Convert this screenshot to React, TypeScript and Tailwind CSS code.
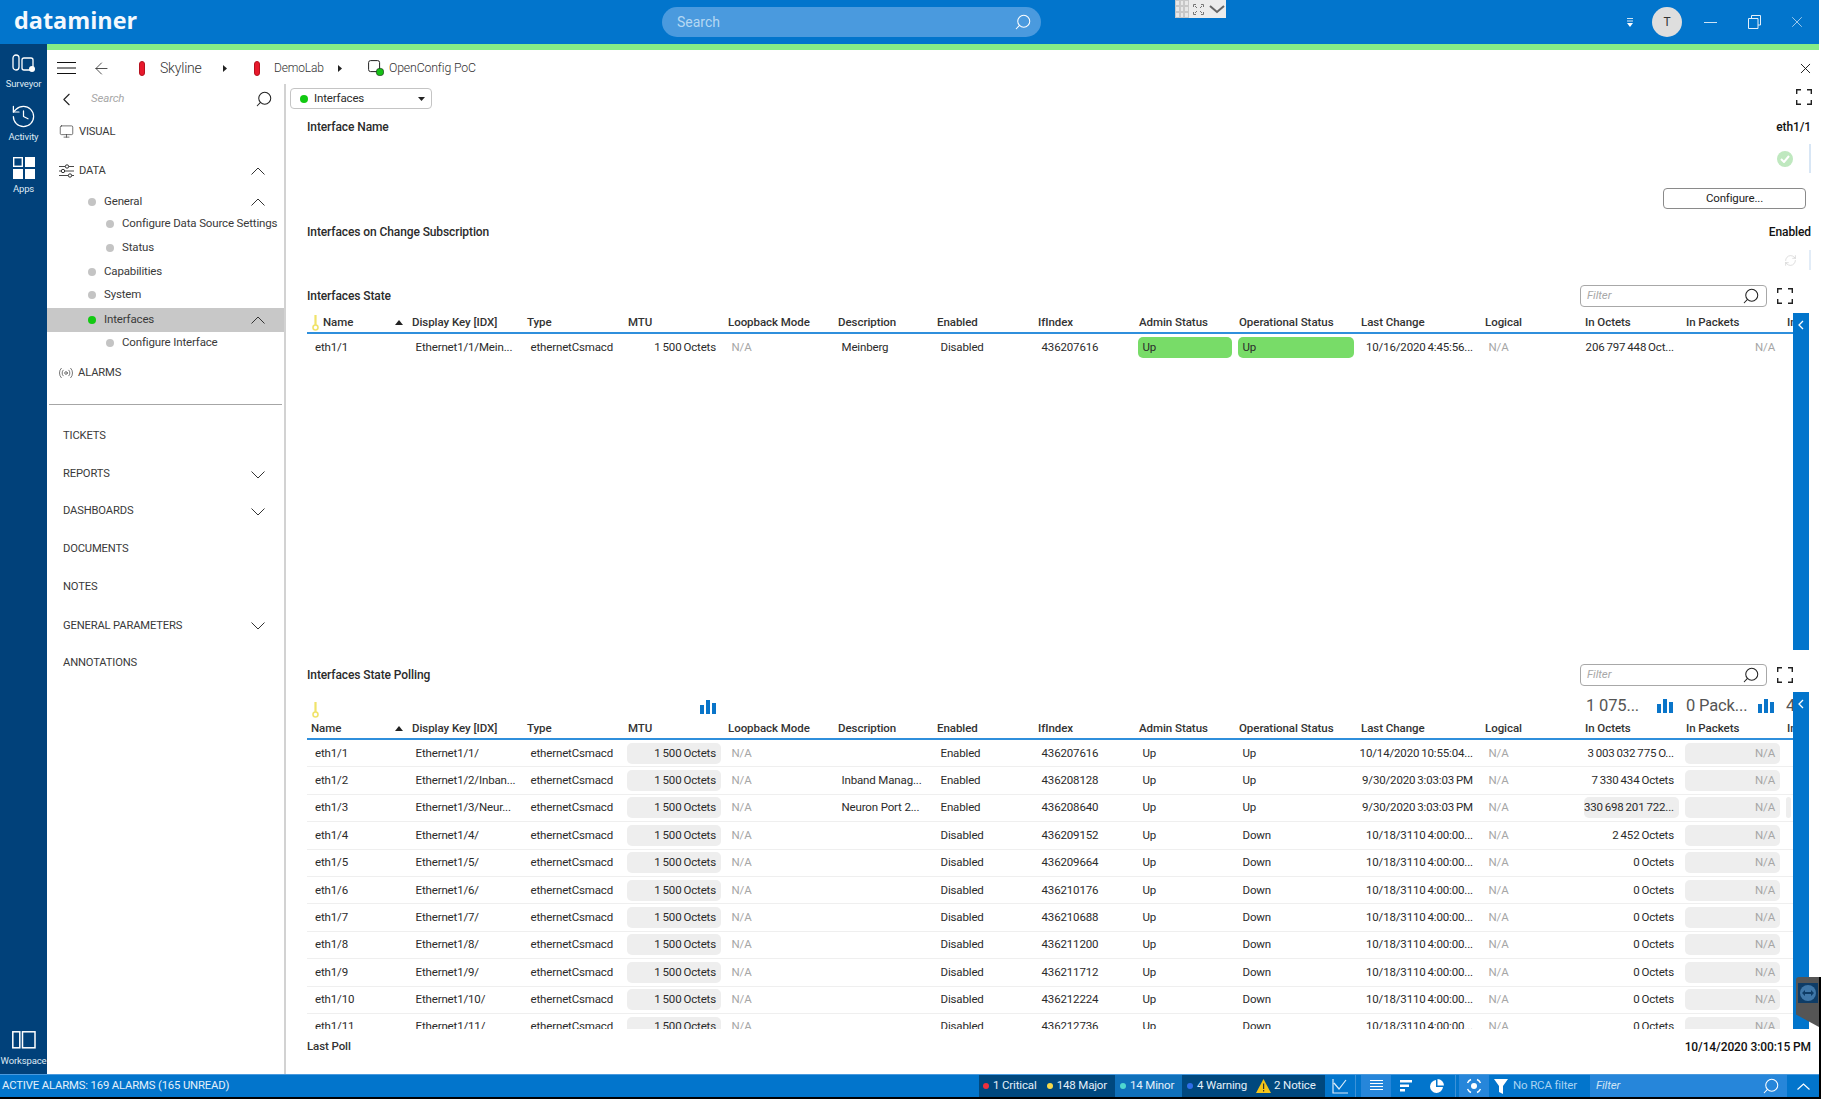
import type { ReactNode } from 'react'
import { ArrowLeft, ChevronLeft, History, Monitor, Radio, RefreshCw, Search, X } from 'lucide-react'

const COLS =
  'grid-cols-[104px_115px_101px_100px_110px_99px_101px_101px_100px_122px_124px_100px_101px_101px_7px]'

const HEADERS = [
  'Display Key [IDX]',
  'Type',
  'MTU',
  'Loopback Mode',
  'Description',
  'Enabled',
  'IfIndex',
  'Admin Status',
  'Operational Status',
  'Last Change',
  'Logical',
  'In Octets',
  'In Packets',
  'In',
]

const RIGHT_COLS = [3, 10, 12, 13]
const MUTED_COLS = [4, 11, 13]

type Tone = 'none' | 'gray' | 'green'

const polling = [
  ['eth1/1', 'Ethernet1/1/', '', 'Enabled', 'Up', '10/14/2020 10:55:04...', '3 003 032 775 O...'],
  ['eth1/2', 'Ethernet1/2/Inban...', 'Inband Manag...', 'Enabled', 'Up', '9/30/2020 3:03:03 PM', '7 330 434 Octets'],
  ['eth1/3', 'Ethernet1/3/Neur...', 'Neuron Port 2...', 'Enabled', 'Up', '9/30/2020 3:03:03 PM', '330 698 201 722...'],
  ['eth1/4', 'Ethernet1/4/', '', 'Disabled', 'Down', '10/18/3110 4:00:00...', '2 452 Octets'],
  ['eth1/5', 'Ethernet1/5/', '', 'Disabled', 'Down', '10/18/3110 4:00:00...', '0 Octets'],
  ['eth1/6', 'Ethernet1/6/', '', 'Disabled', 'Down', '10/18/3110 4:00:00...', '0 Octets'],
  ['eth1/7', 'Ethernet1/7/', '', 'Disabled', 'Down', '10/18/3110 4:00:00...', '0 Octets'],
  ['eth1/8', 'Ethernet1/8/', '', 'Disabled', 'Down', '10/18/3110 4:00:00...', '0 Octets'],
  ['eth1/9', 'Ethernet1/9/', '', 'Disabled', 'Down', '10/18/3110 4:00:00...', '0 Octets'],
  ['eth1/10', 'Ethernet1/10/', '', 'Disabled', 'Down', '10/18/3110 4:00:00...', '0 Octets'],
  ['eth1/11', 'Ethernet1/11/', '', 'Disabled', 'Down', '10/18/3110 4:00:00...', '0 Octets'],
]

const Cell = ({ value, col, tone = 'none' }: { value: string; col: number; tone?: Tone }) => {
  const right = RIGHT_COLS.includes(col)
  const muted = MUTED_COLS.includes(col)
  const pad = right ? 'justify-end pr-[5px] [word-spacing:-0.8px]' : col === 0 ? 'pl-[8px]' : 'pl-[4.5px]'
  return (
    <div className="min-w-0 flex items-center overflow-hidden whitespace-nowrap">
      <div
        className={`h-[21px] min-w-0 flex-1 flex items-center rounded-[5px] mr-[6px] ${pad} ${muted ? 'text-[#a6a6a6]' : 'text-[#2b2b2b]'} ${tone === 'gray' ? 'bg-[#eeeeee]' : ''} ${tone === 'green' ? 'bg-[#78dc68]' : ''}`}
      >
        {value}
      </div>
    </div>
  )
}

const HeaderRow = ({ keyInline }: { keyInline?: boolean }) => (
  <div className={`grid ${COLS} h-[19px] items-center border-b-2 border-[#2f8fdc] box-content font-medium tracking-[-0.05px] text-[#333] whitespace-nowrap`}>
    <div className={`flex items-center justify-between pr-[8px] ${keyInline ? 'pl-[5px]' : 'pl-[4px]'}`}>
      <span className="flex items-center gap-[4px]">
        {keyInline && <KeyIcon />}
        Name
      </span>
      <svg width="8" height="5" viewBox="0 0 8 5">
        <path d="M4 0 8 5H0z" fill="#222" />
      </svg>
    </div>
    {HEADERS.map((h) => (
      <div key={h} className="pl-[1px] overflow-hidden">
        {h}
      </div>
    ))}
  </div>
)

const KeyIcon = () => (
  <svg width="7" height="16" viewBox="0 0 7 16">
    <rect x="2.4" y="0" width="2.2" height="11" fill="#f0e36a" />
    <circle cx="3.5" cy="12.5" r="2.5" fill="#fff" stroke="#f0e36a" strokeWidth="1.6" />
  </svg>
)

const Bars = () => (
  <svg width="16" height="14" viewBox="0 0 16 14">
    <rect x="0" y="5" width="4" height="9" fill="#0a75c9" />
    <rect x="6" y="0" width="4" height="14" fill="#0a75c9" />
    <rect x="12" y="3" width="4" height="11" fill="#0a75c9" />
  </svg>
)

const Expand = () => (
  <svg width="16" height="16" viewBox="0 0 16 16" fill="none" stroke="#222" strokeWidth="1.4">
    <path d="M.7 5V.7H5M11 .7h4.3V5M15.3 11v4.3H11M5 15.3H.7V11" />
  </svg>
)

const Chevron = ({ up }: { up?: boolean }) => (
  <svg width="14" height="8" viewBox="0 0 14 8" fill="none" stroke="#333" strokeWidth="1">
    <path d={up ? 'M.5 7.5 7 1l6.5 6.5' : 'M.5.5 7 7 13.5.5'} />
  </svg>
)

const FlipSearch = ({ size, color }: { size: number; color: string }) => (
  <Search size={size} color={color} strokeWidth={1.4} className="-scale-x-100" />
)

const Dot = ({ green }: { green?: boolean }) => (
  <span className={`w-[8px] h-[8px] rounded-full ${green ? 'bg-[#12c912]' : 'bg-[#c4c4c4]'}`} />
)

const FilterBox = () => (
  <div className="w-[187px] h-[22px] flex items-center justify-between pl-[6px] pr-[6px] border border-[#a8a8a8] rounded-[4px]">
    <span className="italic font-normal text-[11.5px] text-[#a8a8a8]">Filter</span>
    <FlipSearch size={18} color="#222" />
  </div>
)

const RailItem = ({ label, icon, className }: { label: string; icon: ReactNode; className: string }) => (
  <div className={`flex flex-col items-center ${className}`}>
    <div className="h-[24px] flex items-center justify-center">{icon}</div>
    <span className="text-[9.5px] leading-[12px] mt-[3px] text-[#dfe9f3]">{label}</span>
  </div>
)

const SideRow = ({
  className,
  children,
  chevron,
}: {
  className: string
  children: ReactNode
  chevron?: 'up' | 'down'
}) => (
  <div className={`flex items-center justify-between pr-[19px] ${className}`}>
    <div className="flex items-center whitespace-nowrap text-[#3a3a3a]">{children}</div>
    {chevron && <Chevron up={chevron === 'up'} />}
  </div>
)

const Seg = ({ dot, children }: { dot: string; children: ReactNode }) => (
  <span className="flex items-center gap-[4px]">
    <span className={`w-[6px] h-[6px] rounded-full ${dot}`} />
    {children}
  </span>
)

export default function App() {
  return (
    <div className="relative w-[1821px] h-[1099px] flex flex-col overflow-hidden bg-white text-[11.5px] tracking-[-0.15px] [font-family:Roboto,sans-serif]">
      {/* title bar */}
      <div className="w-[1819px] h-[44px] shrink-0 flex items-center bg-[#0275cc] text-white">
        <div className="w-[662px] pl-[14px] text-[23.4px] tracking-normal font-bold leading-none pb-[2px] [font-family:'Open_Sans',sans-serif] text-[#f4f9fd]">
          dataminer
        </div>
        <div className="w-[379px] h-[30px] flex items-center justify-between pl-[15px] pr-[9px] rounded-full bg-[#4a9ade]">
          <span className="text-[14px] tracking-normal text-[#b5d8f3]">Search</span>
          <FlipSearch size={18} color="#fff" />
        </div>
        <div className="flex-1" />
        <svg width="8" height="9" viewBox="0 0 8 9" className="shrink-0">
          <path d="M1 0h6v1H1zM1 2.4h6v1H1z" fill="#cfe4f5" />
          <path d="M1 5h6L4 9z" fill="#fff" />
        </svg>
        <div className="ml-[18px] w-[30px] h-[30px] flex items-center justify-center rounded-full bg-[#dedede] text-[12px] text-[#333]">
          T
        </div>
        <div className="ml-[22px] w-[13px] h-[1px] bg-[#cfe4f5]" />
        <svg width="13" height="14" viewBox="0 0 13 14" fill="none" stroke="#e4f0fa" className="ml-[31px]">
          <path d="M3.5 3V.5h9v9.500H10M.5 3.500h9.500v10h-9.500z" />
        </svg>
        <X size={18} color="#cfe4f5" strokeWidth={1} className="ml-[27px] mr-[13px]" />
      </div>

      <div className="flex-1 min-h-0 flex">
        {/* left rail */}
        <div className="w-[47px] shrink-0 flex flex-col items-center bg-[#01417a] pt-[6px]">
          <RailItem
            label="Surveyor"
            className="mt-[1px]"
            icon={
              <svg width="24" height="20" viewBox="0 0 24 20" fill="none" stroke="#fff" strokeWidth="1.3">
                <rect x="1" y="2" width="6" height="15" rx="3" />
                <rect x="10" y="5" width="11" height="12" rx="2" />
                <circle cx="20" cy="16" r="3" fill="#fff" stroke="none" />
              </svg>
            }
          />
          <RailItem
            label="Activity"
            className="mt-[14px]"
            icon={<History size={27} color="#fff" strokeWidth={1.1} />}
          />
          <RailItem
            label="Apps"
            className="mt-[13px]"
            icon={
              <svg width="22" height="22" viewBox="0 0 22 22">
                <rect x=".7" y=".7" width="8.600" height="8.600" fill="none" stroke="#fff" strokeWidth="1.4" />
                <rect x="12" y="0" width="10" height="10" fill="#fff" />
                <rect x="0" y="12" width="10" height="10" fill="#fff" />
                <rect x="12" y="12" width="10" height="10" fill="#fff" />
              </svg>
            }
          />
          <div className="flex-1" />
          <RailItem
            label="Workspace"
            className="mb-[7px]"
            icon={
              <svg width="24" height="18" viewBox="0 0 24 18" fill="none" stroke="#fff" strokeWidth="1.500">
                <rect x=".8" y=".8" width="7" height="16" />
                <rect x="10.500" y=".8" width="12.500" height="16" />
              </svg>
            }
          />
        </div>

        <div className="flex-1 min-w-0 flex flex-col">
          <div className="h-[6px] shrink-0 w-[1772px] bg-[#86ec86]" />

          {/* breadcrumb */}
          <div className="h-[34px] shrink-0 flex items-center pt-[2px] text-[#333]">
            <svg width="19" height="12" viewBox="0 0 19 12" stroke="#111" strokeWidth="1" className="ml-[10px]">
              <path d="M0 .5h19M0 6h19M0 11.500h19" />
            </svg>
            <ArrowLeft size={19} strokeWidth={1} color="#222" className="ml-[16px]" />
            <span className="ml-[28px] w-[6px] h-[15px] rounded-full bg-[#e8192c] border border-[#b5121f]" />
            <span className="ml-[15px] text-[14px] tracking-[-0.2px] font-light w-[63px]">Skyline</span>
            <svg width="4" height="7" viewBox="0 0 4 7">
              <path d="M0 0l4 3.500L0 7z" fill="#222" />
            </svg>
            <span className="ml-[27px] w-[6px] h-[15px] rounded-full bg-[#e8192c] border border-[#b5121f]" />
            <span className="ml-[14px] text-[12px] font-light w-[64px]">DemoLab</span>
            <svg width="4" height="7" viewBox="0 0 4 7">
              <path d="M0 0l4 3.500L0 7z" fill="#222" />
            </svg>
            <svg width="16" height="16" viewBox="0 0 16 16" fill="none" className="ml-[26px]">
              <rect x=".6" y=".6" width="11" height="11" rx="2" stroke="#222" />
              <circle cx="12" cy="12" r="3.800" fill="#15c015" stroke="#222" strokeWidth=".6" />
            </svg>
            <span className="ml-[5px] text-[12.3px] font-light">OpenConfig PoC</span>
            <div className="flex-1" />
            <X size={17} strokeWidth={1.3} color="#111" className="mr-[7px]" />
          </div>

          <div className="flex-1 min-h-0 flex">
            {/* sidebar */}
            <div className="w-[239px] shrink-0 border-r-2 border-[#d2d2d2]">
              <div className="h-[30px] flex items-center justify-between pl-[9px] pr-[11px]">
                <ChevronLeft size={21} strokeWidth={1.3} color="#222" />
                <span className="ml-[14px] flex-1 italic text-[#a8a8a8]">Search</span>
                <FlipSearch size={18} color="#222" />
              </div>
              <SideRow className="h-[36px] pl-[12px] text-[11.2px]">
                <Monitor size={15} strokeWidth={1} color="#222" className="mr-[5px]" />
                VISUAL
              </SideRow>
              <SideRow className="h-[42px] pl-[12px] text-[11.2px]" chevron="up">
                <svg width="15" height="14" viewBox="0 0 15 14" fill="none" stroke="#333" className="mr-[5px]">
                  <path d="M0 2.500h15M0 7h15M0 11.500h15" strokeWidth=".9" />
                  <circle cx="8" cy="2.500" r="1.700" fill="#fff" />
                  <circle cx="4" cy="7" r="1.700" fill="#fff" />
                  <circle cx="11" cy="11.500" r="1.700" fill="#fff" />
                </svg>
                DATA
              </SideRow>
              <SideRow className="h-[20px] pl-[41px]" chevron="up">
                <Dot />
                <span className="ml-[8px]">General</span>
              </SideRow>
              <SideRow className="h-[24px] pl-[59px] pr-0">
                <Dot />
                <span className="ml-[8px]">Configure Data Source Settings</span>
              </SideRow>
              <SideRow className="h-[24px] pl-[59px]">
                <Dot />
                <span className="ml-[8px]">Status</span>
              </SideRow>
              <SideRow className="h-[24px] pl-[41px]">
                <Dot />
                <span className="ml-[8px]">Capabilities</span>
              </SideRow>
              <SideRow className="h-[22px] pl-[41px] mb-[2px]">
                <Dot />
                <span className="ml-[8px]">System</span>
              </SideRow>
              <SideRow className="h-[24px] pl-[41px] bg-[#c8c8c8]" chevron="up">
                <Dot green />
                <span className="ml-[8px]">Interfaces</span>
              </SideRow>
              <SideRow className="h-[22px] pl-[59px]">
                <Dot />
                <span className="ml-[8px]">Configure Interface</span>
              </SideRow>
              <SideRow className="h-[38px] pl-[11px] text-[11.2px]">
                <Radio size={16} strokeWidth={1} color="#333" className="mr-[4px]" />
                ALARMS
              </SideRow>
              <div className="mt-[12px] mb-[12px] mx-[2px] h-[1px] bg-[#a6a6a6]" />
              <SideRow className="h-[38px] pl-[16px] text-[11.2px]">TICKETS</SideRow>
              <SideRow className="h-[39px] pl-[16px] text-[11.2px]" chevron="down">
                REPORTS
              </SideRow>
              <SideRow className="h-[35px] pl-[16px] text-[11.2px]" chevron="down">
                DASHBOARDS
              </SideRow>
              <SideRow className="h-[40px] pl-[16px] text-[11.2px]">DOCUMENTS</SideRow>
              <SideRow className="h-[36px] pl-[16px] text-[11.2px]">NOTES</SideRow>
              <SideRow className="h-[42px] pl-[16px] text-[11.2px]" chevron="down">
                GENERAL PARAMETERS
              </SideRow>
              <SideRow className="h-[32px] pl-[16px] text-[11.2px]">ANNOTATIONS</SideRow>
            </div>

            {/* main panel */}
            <div className="flex-1 min-w-0 flex flex-col pl-[21px] pr-[10px] text-[#2b2b2b]">
              <div className="h-[33px] -ml-[17px] pt-[4px] flex justify-between items-start">
                <div className="w-[142px] h-[21px] flex items-center pl-[9px] pr-[6px] border border-[#c4c4c4] rounded-[4px]">
                  <Dot green />
                  <span className="ml-[6px] flex-1">Interfaces</span>
                  <svg width="7" height="4" viewBox="0 0 7 4">
                    <path d="M0 0h7L3.500 4z" fill="#222" />
                  </svg>
                </div>
                <div className="mt-[1px] mr-[-1px]">
                  <Expand />
                </div>
              </div>

              <div className="h-[20px] flex items-center justify-between font-medium text-[12px] tracking-[-0.1px]">
                <span>Interface Name</span>
                <span className="text-[#111]">eth1/1</span>
              </div>
              <div className="mt-[7px] h-[29px] flex items-center justify-end border-r-2 border-[#d8e6f5] box-content pr-0">
                <span className="mr-[16px] w-[16px] h-[16px] rounded-full bg-[#bfe8bf] flex items-center justify-center">
                  <svg width="10" height="8" viewBox="0 0 10 8" fill="none" stroke="#fff" strokeWidth="2">
                    <path d="M1 4l3 3 5-6" />
                  </svg>
                </span>
              </div>
              <div className="mt-[15px] flex justify-end">
                <div className="w-[143px] h-[21px] mr-[5px] flex items-center justify-center border border-[#8a8a8a] rounded-[4px] text-[#222]">
                  Configure...
                </div>
              </div>
              <div className="mt-[13px] h-[20px] flex items-center justify-between font-medium text-[12px] tracking-[-0.1px]">
                <span>Interfaces on Change Subscription</span>
                <span className="text-[#111]">Enabled</span>
              </div>
              <div className="mt-[8px] h-[20px] flex items-center justify-end border-r-2 border-[#e2ecf7] box-content">
                <RefreshCw size={13} strokeWidth={1} color="#c4c4c4" className="mr-[12px]" />
              </div>

              <div className="mt-[15px] h-[22px] flex items-center font-medium text-[12px] tracking-[-0.1px]">
                <span className="flex-1">Interfaces State</span>
                <FilterBox />
                <div className="ml-[10px] mr-[18px]">
                  <Expand />
                </div>
              </div>

              <div className="mt-[6px] h-[337px] shrink-0 flex">
                <div className="w-[1486px] shrink-0 overflow-hidden">
                  <HeaderRow keyInline />
                  <div className={`grid ${COLS} h-[27.4px]`}>
                    {[
                      'eth1/1',
                      'Ethernet1/1/Mein...',
                      'ethernetCsmacd',
                      '1 500 Octets',
                      'N/A',
                      'Meinberg',
                      'Disabled',
                      '436207616',
                      'Up',
                      'Up',
                      '10/16/2020 4:45:56...',
                      'N/A',
                      '206 797 448 Oct...',
                      'N/A',
                      '',
                    ].map((v, i) => (
                      <Cell key={i} value={v} col={i} tone={i === 8 || i === 9 ? 'green' : 'none'} />
                    ))}
                  </div>
                </div>
                <div className="w-[16px] shrink-0 flex justify-center bg-[#0275cc] pt-[7px]">
                  <svg width="6" height="10" viewBox="0 0 6 10" fill="none" stroke="#fff" strokeWidth="1.300">
                    <path d="M5 1 1 5l4 4" />
                  </svg>
                </div>
              </div>

              <div className="mt-[14px] h-[22px] flex items-center font-medium text-[12px] tracking-[-0.1px]">
                <span className="flex-1">Interfaces State Polling</span>
                <FilterBox />
                <div className="ml-[10px] mr-[18px]">
                  <Expand />
                </div>
              </div>

              <div className="mt-[6px] h-[337px] shrink-0 flex">
                <div className="w-[1486px] shrink-0 overflow-hidden">
                  <div className={`grid ${COLS} h-[27px] items-end`}>
                    <div className="pl-[5px] pb-[1px]">
                      <KeyIcon />
                    </div>
                    <div />
                    <div />
                    <div className="pb-[5px] flex justify-end pr-[11px]">
                      <Bars />
                    </div>
                    <div />
                    <div />
                    <div />
                    <div />
                    <div />
                    <div />
                    <div />
                    <div />
                    <div className="flex items-center justify-between pr-[12px] pb-[1px] pl-[2px]">
                      <span className="text-[16.5px] leading-[24px] text-[#555]">1 075...</span>
                      <Bars />
                    </div>
                    <div className="flex items-center justify-between pr-[12px] pb-[1px] pl-[1px]">
                      <span className="text-[16.5px] leading-[24px] text-[#555]">0 Pack...</span>
                      <Bars />
                    </div>
                    <div className="text-[16.5px] leading-[24px] pb-[1px] text-[#555] overflow-hidden">4</div>
                  </div>
                  <HeaderRow />
                  <div>
                    {polling.map((r, idx) => (
                      <div
                        key={r[0]}
                        className={`grid ${COLS} h-[27.4px] border-b border-[#efefef]`}
                      >
                        <Cell value={r[0]} col={0} />
                        <Cell value={r[1]} col={1} />
                        <Cell value="ethernetCsmacd" col={2} />
                        <Cell value="1 500 Octets" col={3} tone="gray" />
                        <Cell value="N/A" col={4} />
                        <Cell value={r[2]} col={5} />
                        <Cell value={r[3]} col={6} />
                        <Cell value={String(436207616 + 512 * idx)} col={7} />
                        <Cell value="Up" col={8} />
                        <Cell value={r[4]} col={9} />
                        <Cell value={r[5]} col={10} />
                        <Cell value="N/A" col={11} />
                        <Cell value={r[6]} col={12} tone={idx === 2 ? 'gray' : 'none'} />
                        <Cell value="N/A" col={13} tone="gray" />
                        <Cell value="" col={14} tone={idx === 2 ? 'gray' : 'none'} />
                      </div>
                    ))}
                  </div>
                </div>
                <div className="w-[16px] shrink-0 flex justify-center bg-[#0275cc] pt-[7px]">
                  <svg width="6" height="10" viewBox="0 0 6 10" fill="none" stroke="#fff" strokeWidth="1.300">
                    <path d="M5 1 1 5l4 4" />
                  </svg>
                </div>
              </div>

              <div className="mt-[8px] h-[20px] flex items-center justify-between text-[12px] tracking-[-0.1px]">
                <span className="font-medium text-[#333] text-[11.5px]">Last Poll</span>
                <span className="font-medium text-[#111]">10/14/2020 3:00:15 PM</span>
              </div>
            </div>
          </div>
        </div>
      </div>

      {/* status bar */}
      <div className="h-[23px] w-[1819px] shrink-0 flex items-center bg-[#0275cc] border-t border-[#4a9ade] text-[11.5px] text-[#e4f0fa] whitespace-nowrap">
        <span className="w-[979px] pl-[2px] text-[11.3px]">ACTIVE ALARMS: 169 ALARMS (165 UNREAD)</span>
        <div className="h-full w-[136px] flex items-center gap-[10px] pl-[4px] bg-[#00487e]">
          <Seg dot="bg-[#f0303c]">1 Critical</Seg>
          <Seg dot="bg-[#f5d94a]">148 Major</Seg>
        </div>
        <div className="h-full w-[67px] flex items-center pl-[5px] bg-[#0f70ba]">
          <Seg dot="bg-[#4fd6d0]">14 Minor</Seg>
        </div>
        <div className="h-full w-[143px] flex items-center gap-[9px] pl-[5px] bg-[#00487e]">
          <Seg dot="bg-[#2f6ee8]">4 Warning</Seg>
          <span className="flex items-center gap-[3px]">
            <svg width="15" height="14" viewBox="0 0 15 14">
              <path d="M7.500 0 15 14H0z" fill="#f5c518" />
              <path d="M7 4.500h1.200v5.500H7zM7 11h1.200v1.500H7z" fill="#333" />
            </svg>
            2 Notice
          </span>
        </div>
        <div className="h-full w-[30px] flex items-center justify-center">
          <svg width="16" height="15" viewBox="0 0 16 15" fill="none" stroke="#dcecf9" strokeWidth="1.200">
            <path d="M1 0v14h15M2 4l5 6 7-9" />
          </svg>
        </div>
        <div className="h-full w-[6px] border-l border-[#3c92d8]" />
        <div className="h-full w-[30px] flex items-center justify-center bg-[#2686da]">
          <svg width="13" height="12" viewBox="0 0 13 12" stroke="#fff" strokeWidth="1">
            <path d="M0 .5h13M0 3.500h13M0 6.500h13M0 9.500h13" />
          </svg>
        </div>
        <div className="h-full w-[30px] flex items-center justify-center">
          <svg width="12" height="12" viewBox="0 0 12 12" fill="#fff">
            <path d="M0 0h12v2.500H0zM0 4.500h9V7H0zM0 9h5v2.500H0z" />
          </svg>
        </div>
        <div className="h-full w-[32px] flex items-center justify-center">
          <svg width="14" height="14" viewBox="0 0 14 14" fill="#fff">
            <path d="M6 1a6.500 6.500 0 1 0 7 7H6z" />
            <path d="M7.500 0A6.500 6.500 0 0 1 14 6.500H7.500z" />
          </svg>
        </div>
        <div className="h-full w-[4px] ml-[2px] border-l border-[#3c92d8]" />
        <div className="h-full w-[30px] flex items-center justify-center bg-[#2686da]">
          <svg width="16" height="16" viewBox="0 0 16 16" fill="none" stroke="#fff" strokeWidth="1.400">
            <path d="M5 1.500A7 7 0 0 0 1.500 5M11 1.500A7 7 0 0 1 14.500 5M5 14.500A7 7 0 0 1 1.500 11M11 14.500A7 7 0 0 0 14.500 11" />
            <circle cx="8" cy="8" r="3" fill="#fff" stroke="none" />
          </svg>
        </div>
        <svg width="14" height="15" viewBox="0 0 14 15" fill="#fff" className="ml-[5px]">
          <path d="M0 0h14L9 7v8l-4-2V7z" />
        </svg>
        <span className="ml-[5px] w-[77px] text-[#a9d3f2]">No RCA filter</span>
        <div className="h-full w-[197px] flex items-center justify-between pl-[6px] pr-[7px] bg-[#2686da]">
          <span className="italic text-[#cfe4f5]">Filter</span>
          <FlipSearch size={18} color="#fff" />
        </div>
        <svg width="13" height="7" viewBox="0 0 13 7" fill="none" stroke="#fff" strokeWidth="1.200" className="ml-[10px]">
          <path d="M.5 6.500 6.500 1l6 5.500" />
        </svg>
      </div>
      <div className="h-[2px] shrink-0 bg-black" />

      {/* floating window strip over the title bar */}
      <div className="absolute left-[1175px] top-0 w-[51px] h-[18px] flex items-center bg-[#ececec]">
        <div className="w-[14px] h-full bg-[#c8c8c8] grid grid-cols-3 gap-[2px] p-[1px]">
          {[0, 1, 2, 3, 4, 5, 6, 7, 8].map((i) => (
            <span key={i} className="bg-[#e8e8e8]" />
          ))}
        </div>
        <svg width="11" height="11" viewBox="0 0 11 11" fill="none" stroke="#777" className="ml-[4px]">
          <path d="M.5 3V.5H3M8 .5h2.500V3M10.500 8v2.500H8M3 10.500H.5V8M2 2l2 2M9 2 7 4M9 9 7 7M2 9l2-2" />
        </svg>
        <svg width="16" height="9" viewBox="0 0 16 9" fill="none" stroke="#666" strokeWidth="2" className="ml-[5px]">
          <path d="M1 1l7 6 7-6" />
        </svg>
      </div>

      {/* remote support tab */}
      <div className="absolute left-[1796px] top-[977px] w-[23px] h-[50px] bg-[#555] rounded-tl-[3px] [clip-path:polygon(0_0,100%_0,100%_100%,0_75%)] flex items-start justify-center pt-[6px]">
        <div className="w-[20px] h-[20px] bg-[#0e3c66] flex items-center justify-center">
          <div className="w-[16px] h-[16px] rounded-full bg-[#3f77a8] flex items-center justify-center">
            <svg width="12" height="6" viewBox="0 0 12 6" fill="#0e3c66">
              <path d="M0 3l3-3v2h6V0l3 3-3 3V4H3v2z" />
            </svg>
          </div>
        </div>
      </div>
      <div className="absolute left-[1819px] top-[977px] w-[2px] h-[122px] bg-black" />
    </div>
  )
}
